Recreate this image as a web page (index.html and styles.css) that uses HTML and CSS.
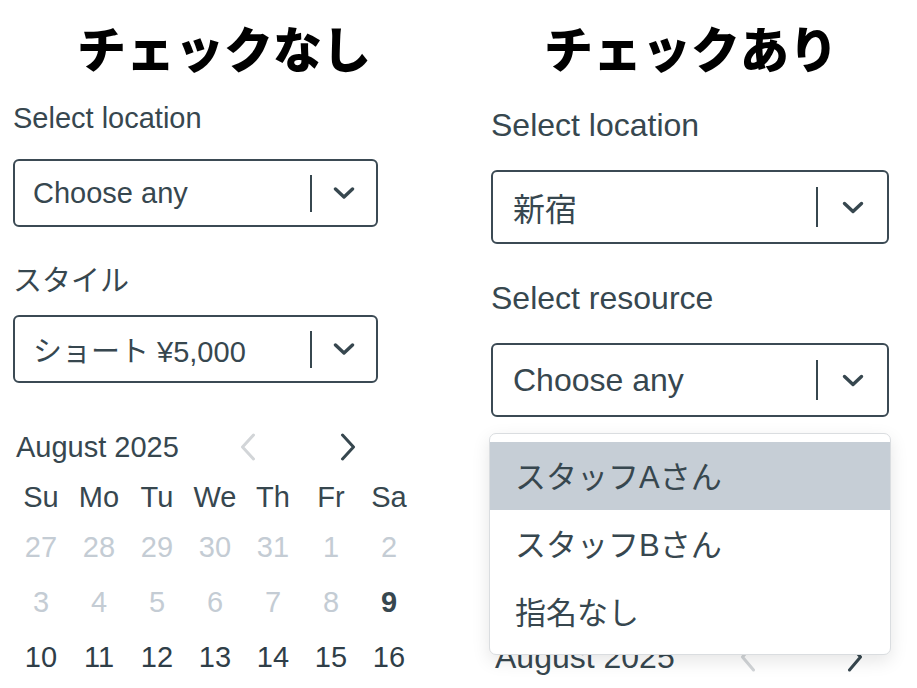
FILE: index.html
```html
<!DOCTYPE html>
<html lang="ja">
<head>
<meta charset="utf-8">
<title>チェック比較</title>
<link rel="stylesheet" href="styles.css">
</head>
<body>
<div class="page">
  <section class="col col--left">
    <h1 class="title title--left">チェックなし</h1>
    <div class="body body--left">
      <div class="label label--loc">Select location</div>
      <div class="select select--first">
        <span class="select__value">Choose any</span>
        <span class="select__sep"></span>
        <svg class="select__chev" viewBox="0 0 22 12"><polyline points="2.5,2 11,10 19.5,2"/></svg>
      </div>
      <div class="label label--style">スタイル</div>
      <div class="select select--next">
        <span class="select__value">ショート ¥5,000</span>
        <span class="select__sep"></span>
        <svg class="select__chev" viewBox="0 0 22 12"><polyline points="2.5,2 11,10 19.5,2"/></svg>
      </div>
      <div class="cal">
        <div class="cal__head">
          <span class="cal__title">August 2025</span>
          <svg class="cal__nav cal__nav--prev" viewBox="0 0 16 28"><polyline points="13.5,2 2.5,14 13.5,26"/></svg>
          <svg class="cal__nav cal__nav--next" viewBox="0 0 16 28"><polyline points="2.5,2 13.5,14 2.5,26"/></svg>
        </div>
        <div class="cal__grid">
          <span class="cal__wd">Su</span><span class="cal__wd">Mo</span><span class="cal__wd">Tu</span><span class="cal__wd">We</span><span class="cal__wd">Th</span><span class="cal__wd">Fr</span><span class="cal__wd">Sa</span>
          <span class="cal__day cal__day--off">27</span><span class="cal__day cal__day--off">28</span><span class="cal__day cal__day--off">29</span><span class="cal__day cal__day--off">30</span><span class="cal__day cal__day--off">31</span><span class="cal__day cal__day--off">1</span><span class="cal__day cal__day--off">2</span>
          <span class="cal__day cal__day--off">3</span><span class="cal__day cal__day--off">4</span><span class="cal__day cal__day--off">5</span><span class="cal__day cal__day--off">6</span><span class="cal__day cal__day--off">7</span><span class="cal__day cal__day--off">8</span><span class="cal__day cal__day--today">9</span>
          <span class="cal__day">10</span><span class="cal__day">11</span><span class="cal__day">12</span><span class="cal__day">13</span><span class="cal__day">14</span><span class="cal__day">15</span><span class="cal__day">16</span>
        </div>
      </div>
    </div>
  </section>

  <section class="col col--right">
    <h1 class="title title--right">チェックあり</h1>
    <div class="body body--right">
      <div class="label label--loc">Select location</div>
      <div class="select select--first">
        <span class="select__value">新宿</span>
        <span class="select__sep"></span>
        <svg class="select__chev" viewBox="0 0 22 13"><polyline points="2.5,2.5 11,10.5 19.5,2.5"/></svg>
      </div>
      <div class="label label--res">Select resource</div>
      <div class="select select--next select--open">
        <span class="select__value">Choose any</span>
        <span class="select__sep"></span>
        <svg class="select__chev" viewBox="0 0 22 13"><polyline points="2.5,2.5 11,10.5 19.5,2.5"/></svg>
        <ul class="menu">
          <li class="menu__item menu__item--active">スタッフAさん</li>
          <li class="menu__item">スタッフBさん</li>
          <li class="menu__item">指名なし</li>
        </ul>
      </div>
      <div class="cal">
        <div class="cal__head">
          <span class="cal__title">August 2025</span>
          <svg class="cal__nav cal__nav--prev" viewBox="0 0 16 30"><polyline points="13.5,2 2.5,15 13.5,28"/></svg>
          <svg class="cal__nav cal__nav--next" viewBox="0 0 16 30"><polyline points="2.5,2 13.5,15 2.5,28"/></svg>
        </div>
      </div>
    </div>
  </section>
</div>
</body>
</html>
```
FILE: styles.css
```css
html, body {
  margin: 0;
  padding: 0;
  overflow: hidden;
  background: #ffffff;
}

body {
  font-family: "Liberation Sans", "Noto Sans CJK JP", sans-serif;
  color: #37474f;
}

.page {
  display: grid;
  grid-template-columns: 460px 457px;
  height: 688px;
  overflow: hidden;
}

.col {
  padding-top: 22px;
  min-width: 0;
}

.title {
  margin: 0;
  font-family: "Noto Sans CJK JP", sans-serif;
  font-weight: 900;
  font-size: 49px;
  line-height: 49px;
  color: #000000;
  text-align: center;
  white-space: nowrap;
}
.title--left { padding-right: 12px; }
.title--right { padding-left: 5px; }

.body--left {
  padding-left: 13px;
  width: 365px;
  --fs: 29px;
  --lh: 34px;
}
.body--right {
  padding-left: 31px;
  width: 398px;
  --fs: 32px;
  --lh: 38px;
}

.label {
  font-size: var(--fs);
  line-height: var(--lh);
  white-space: nowrap;
}

/* selects */
.select {
  position: relative;
  display: flex;
  align-items: center;
  box-sizing: border-box;
  border: 2px solid #3b4a54;
  border-radius: 6px;
  font-size: var(--fs);
  background: #fff;
}
.select__value {
  flex: 1;
  white-space: nowrap;
}
.select__sep {
  width: 2px;
  background: #37474f;
}
.select__chev {
  width: 22px;
  fill: none;
  stroke: #37474f;
  stroke-width: 3.4;
  stroke-linecap: round;
  stroke-linejoin: round;
}

.body--left .select { height: 68px; padding-left: 18px; }
.body--left .select__sep { height: 37px; }
.body--left .select__chev { height: 12px; margin: 0 21px; }
.body--left .label--loc { margin-top: 30px; }
.body--left .select--first { margin-top: 24px; }
.body--left .label--style { margin-top: 37px; }
.body--left .select--next { margin-top: 17px; }

.body--right .select { height: 74px; padding-left: 20px; }
.body--right .select__sep { height: 40px; }
.body--right .select__chev { height: 13px; margin: 0 23px 0 24px; }
.body--right .label--loc { margin-top: 35px; }
.body--right .select--first { margin-top: 26px; }
.body--right .label--res { margin-top: 35px; }
.body--right .select--next { margin-top: 26px; }

/* dropdown menu */
.menu {
  position: absolute;
  z-index: 10;
  top: calc(100% + 18px);
  left: -4px;
  right: -4px;
  margin: 0;
  padding: 8px 0;
  list-style: none;
  background: #ffffff;
  border: 1px solid #dadde0;
  border-radius: 7px;
  box-shadow: 0 6px 18px rgba(0, 0, 0, 0.10);
}
.menu__item {
  display: flex;
  align-items: center;
  height: 68px;
  padding-left: 25px;
  padding-bottom: 3px;
  box-sizing: border-box;
  font-size: 31px;
  color: #37474f;
  white-space: nowrap;
}
.menu__item--active {
  background: #c6ced6;
}

/* calendar */
.cal__head {
  display: flex;
  align-items: center;
}
.cal__title {
  font-size: var(--fs);
  white-space: nowrap;
}
.cal__nav {
  fill: none;
  stroke-width: 3;
  stroke-linecap: round;
  stroke-linejoin: round;
}
.cal__nav--prev { stroke: #d2d5d8; }
.cal__nav--next { stroke: #37474f; }

.body--left .cal__head { margin-top: 44px; height: 40px; padding-left: 3px; }
.body--left .cal__title { width: 224px; }
.body--left .cal__nav { width: 16px; height: 28px; }
.body--left .cal__nav--next { margin-left: 84px; }

.body--right .cal__head { margin-top: 218px; height: 44px; padding-left: 4px; }
.body--right .cal__title { width: 245px; }
.body--right .cal__nav { width: 16px; height: 30px; }
.body--right .cal__nav--next { margin-left: 91px; }

.cal__grid {
  display: grid;
  grid-template-columns: repeat(7, 58px);
  grid-template-rows: 46px;
  grid-auto-rows: 55px;
  margin: 7px 0 0 -1px;
  font-size: var(--fs);
  text-align: center;
}
.cal__wd,
.cal__day {
  display: flex;
  align-items: center;
  justify-content: center;
}
.cal__day { color: #2f3e48; }
.cal__day--off { color: #c4ccd4; }
.cal__day--today { font-weight: 700; color: #37474f; }
```
